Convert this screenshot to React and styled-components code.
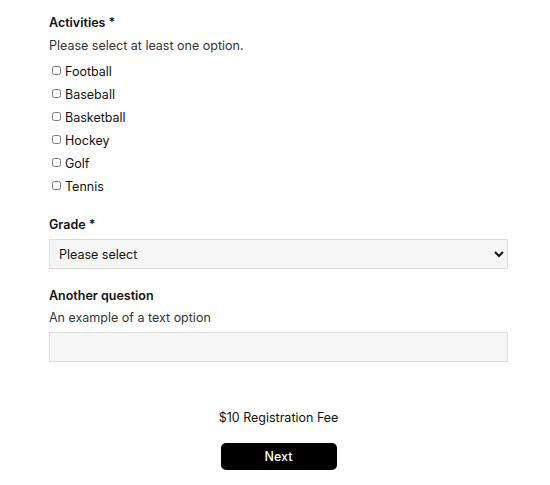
import styled, { createGlobalStyle } from "styled-components"

const GlobalStyle = createGlobalStyle`
    html, body {
        margin: 0;
        padding: 0;
        background: #fff;
    }
    body {
        font-family: "Inter", "Noto Sans", sans-serif;
        color: #111;
    }
`

const activities = ["Football", "Baseball", "Basketball", "Hockey", "Golf", "Tennis"]

const App = () => {
    return (
        <>
            <GlobalStyle />
            <Form onSubmit={(e) => e.preventDefault()}>
                <Field>
                    <Label>Activities *</Label>
                    <Hint>Please select at least one option.</Hint>
                    <CheckList>
                        {activities.map((name) => (
                            <CheckRow key={name}>
                                <Check type="checkbox" name="activities" value={name} />
                                {name}
                            </CheckRow>
                        ))}
                    </CheckList>
                </Field>

                <Field>
                    <Label>Grade *</Label>
                    <Select defaultValue="">
                        <option value="">Please select</option>
                        <option>K</option>
                        <option>1</option>
                        <option>2</option>
                    </Select>
                </Field>

                <Field $space={18}>
                    <Label>Another question</Label>
                    <Hint $space={5}>An example of a text option</Hint>
                    <TextInput type="text" />
                </Field>

                <Footer>
                    <Fee>$10 Registration Fee</Fee>
                    <NextButton type="submit">Next</NextButton>
                </Footer>
            </Form>
        </>
    )
}

export default App

const Form = styled.form`
    display: flex;
    flex-direction: column;
    width: 459px;
    padding: 14px 0 0 49px;
`
const Field = styled.div`
    display: flex;
    flex-direction: column;
    margin-top: ${({ $space }) => $space ?? 21}px;

    &:first-child {
        margin-top: 0;
    }
`
const Label = styled.div`
    font-size: 12.5px;
    font-weight: 600;
    line-height: 17px;
    color: #111;
`
const Hint = styled.div`
    font-size: 12.5px;
    font-weight: 400;
    line-height: 17px;
    margin-top: ${({ $space }) => $space ?? 6}px;
    color: #333;
`
const CheckList = styled.div`
    display: flex;
    flex-direction: column;
    gap: 6px;
    margin-top: 9px;
`
const CheckRow = styled.label`
    display: flex;
    align-items: center;
    gap: 4px;
    font-size: 12.5px;
    line-height: 17px;
    color: #111;
`
const Check = styled.input`
    width: 9px;
    height: 9px;
    margin: 0 0 2px 3px;
`
const Select = styled.select`
    margin-top: 6px;
    height: 30px;
    padding: 0 4px 0 5px;
    font-family: inherit;
    font-size: 12.5px;
    color: #111;
    background: #f5f5f5;
    border: 1px solid #ddd;
    border-radius: 0;
`
const TextInput = styled.input`
    margin-top: 6px;
    height: 30px;
    box-sizing: border-box;
    padding: 0 8px;
    font-family: inherit;
    font-size: 12.5px;
    background: #f6f6f6;
    border: 1px solid #ddd;
    outline: none;
`
const Footer = styled.div`
    display: flex;
    flex-direction: column;
    align-items: center;
    margin-top: 47px;
    gap: 17px;
`
const Fee = styled.div`
    font-size: 12.5px;
    line-height: 17px;
    color: #111;
`
const NextButton = styled.button`
    width: 116px;
    height: 27px;
    border: 0;
    border-radius: 5px;
    background: #000;
    color: #fff;
    font-family: inherit;
    font-size: 12.5px;
    font-weight: 500;
    cursor: pointer;
`
